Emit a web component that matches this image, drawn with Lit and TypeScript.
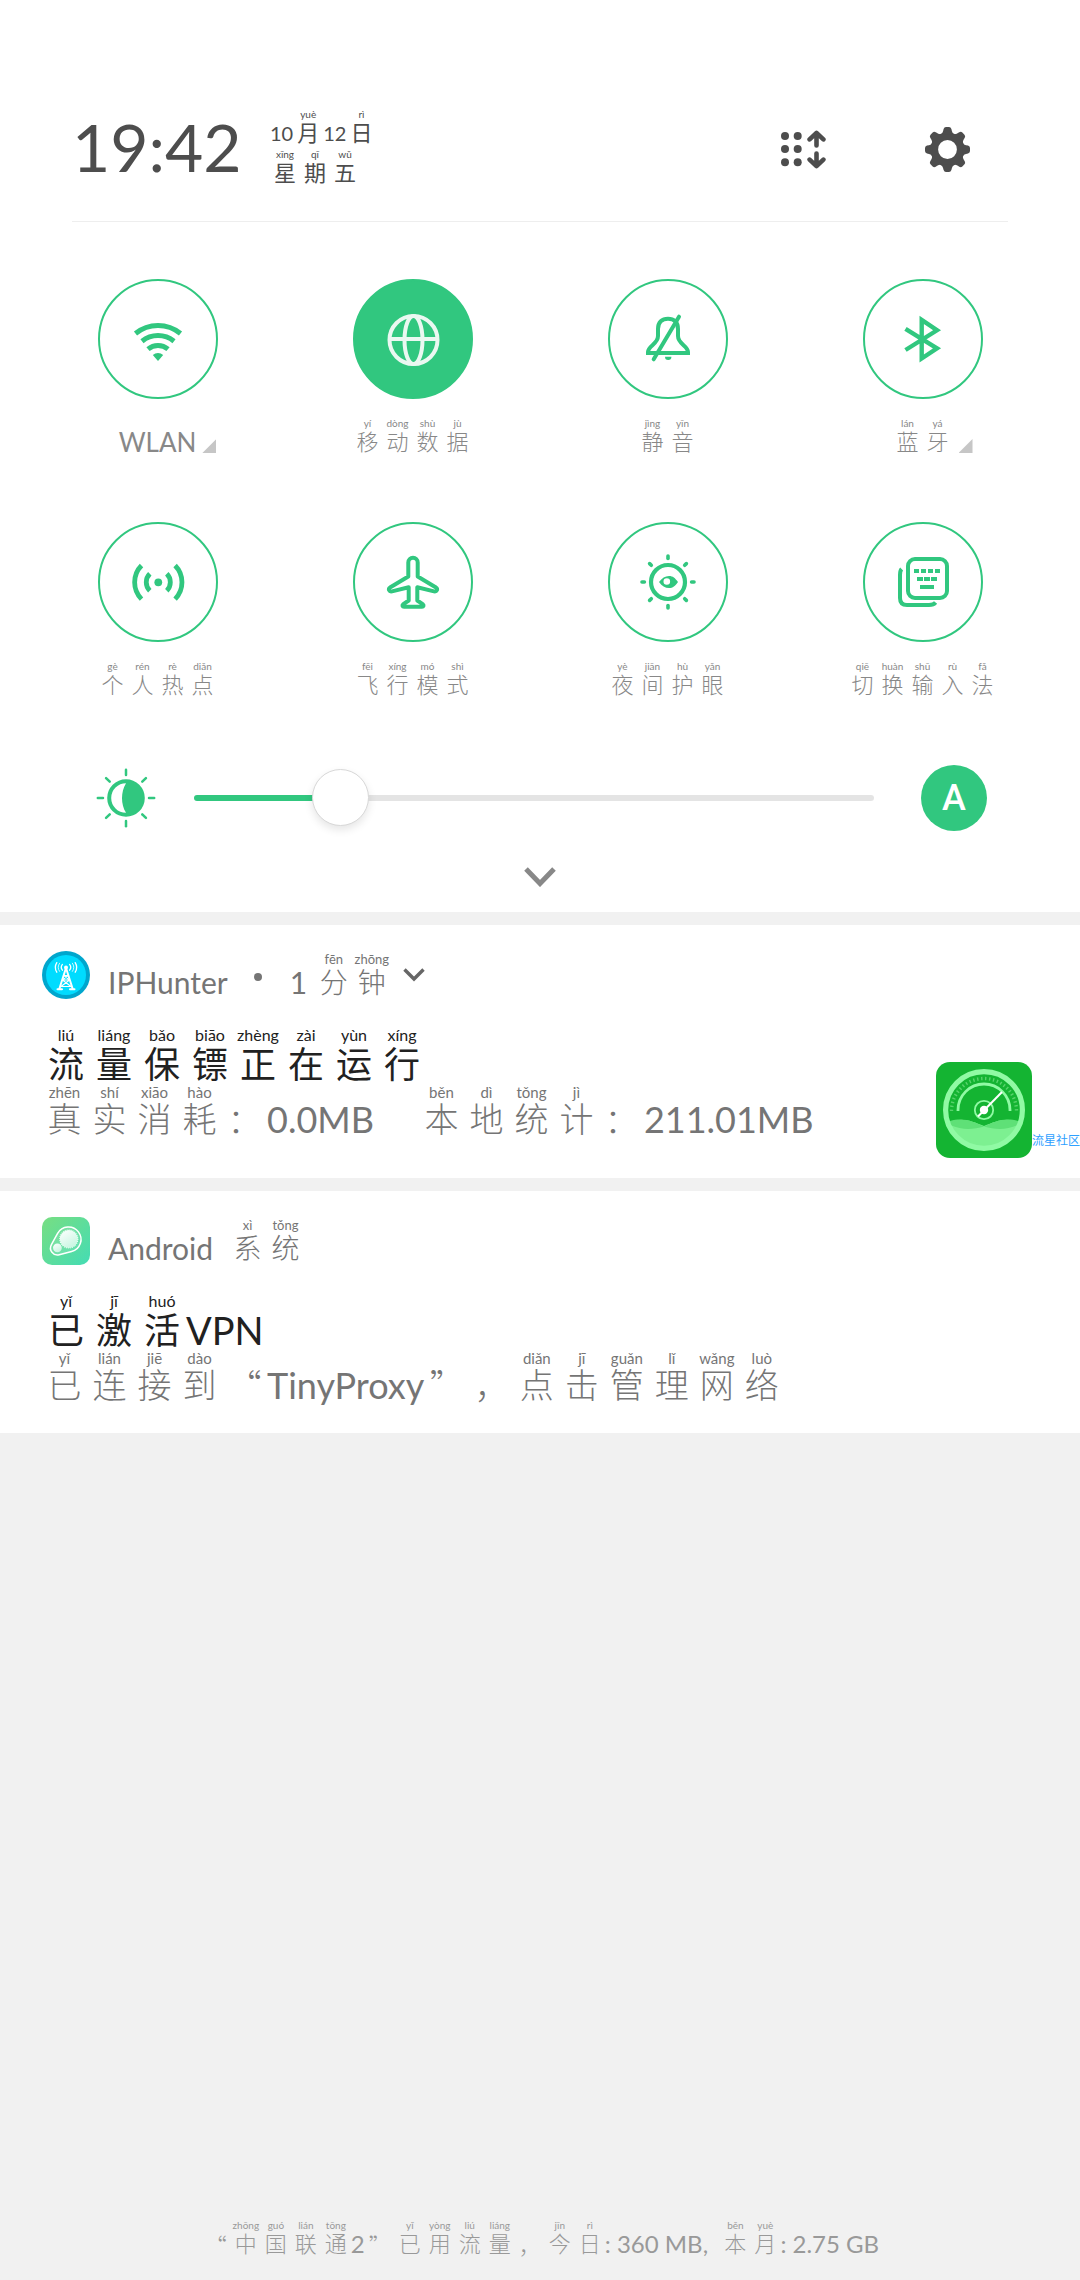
import { LitElement, html, svg, css, TemplateResult, SVGTemplateResult } from "lit";
import { customElement, property, state } from "lit/decorators.js";

/** A run is either plain Latin text or a [character, pinyin] pair. */
type Run = string | [string, string];

/** Pairs each character with its space-separated reading; "-" leaves the reading empty. */
const pair = (chars: string, readings: string): Run[] => {
  const r = readings.split(" ");
  return [...chars].map((c, i) => [c, !r[i] || r[i] === "-" ? "" : r[i]] as [string, string]);
};

@customElement("pinyin-text")
class PinyinText extends LitElement {
  @property({ attribute: false }) runs: Run[] = [];

  static styles = css`
    :host {
      display: inline-flex;
      align-items: flex-end;
      min-height: calc(var(--line) + var(--reading-line));
      white-space: pre;
      font-size: var(--latin);
      line-height: var(--line);
    }
    ruby {
      display: flex;
      flex-direction: column-reverse;
      align-items: center;
      width: var(--cell);
      font-size: var(--han);
      font-weight: var(--han-weight, 300);
      line-height: var(--line);
    }
    .mark {
      display: block;
      width: var(--cell);
      font-family: "Noto Sans CJK SC", sans-serif;
      font-size: var(--han);
      font-weight: 300;
      text-align: center;
    }
    rt {
      display: block;
      height: var(--reading-line);
      font-size: var(--reading);
      line-height: var(--reading-line);
      font-weight: 400;
      text-align: center;
    }
  `;

  private run(r: Run): TemplateResult {
    if (typeof r === "string") return html`<span>${r}</span>`;
    const [char, reading] = r;
    return reading ? html`<ruby>${char}<rt>${reading}</rt></ruby>` : html`<span class="mark">${char}</span>`;
  }

  render() {
    return this.runs.map((r) => this.run(r));
  }
}

const rays = (path: SVGTemplateResult) =>
  [0, 45, 90, 135, 180, 225, 270, 315].map((a) => svg`<g transform="rotate(${a} 30 30)">${path}</g>`);

const icons: Record<string, SVGTemplateResult> = {
  wifi: svg`<g fill="none" stroke="currentColor" stroke-width="5">
      <path d="M7.5 24.5A35.5 35.5 0 0 1 52.5 24.5"/>
      <path d="M14 32.2A25.5 25.5 0 0 1 46 32.2"/>
      <path d="M20 40.2A15.5 15.5 0 0 1 40 40.2"/></g>
      <path fill="currentColor" d="M30 52L24.8 46A8 8 0 0 1 35.2 46Z"/>`,
  globe: svg`<g fill="none" stroke="currentColor" stroke-width="4">
      <circle cx="30.5" cy="31" r="24"/><ellipse cx="30.5" cy="31" rx="9" ry="24"/><path d="M6 30H55"/></g>`,
  bell: svg`<g fill="none" stroke="currentColor" stroke-width="4">
      <path d="M10 44V43C10 37 20 35 20 27V20C20 13 24 9.7 30 9.7S40 13 40 20V27C40 35 50 37 50 43V44Z"/>
      <path stroke-linecap="round" d="M15.7 50.3L41 7.7"/></g>
      <path fill="currentColor" d="M27 47.7H33.4C33.4 50 32.4 51 30.2 51S27 50 27 47.7Z"/>`,
  bluetooth: svg`<path fill="none" stroke="currentColor" stroke-width="4.4"
      d="M12.5 19.8L44 39.3L28.7 49.5V11L44 21.3L12.5 41"/>`,
  hotspot: svg`<circle cx="30.3" cy="30.3" r="3.9" fill="currentColor"/>
      <g fill="none" stroke="currentColor" stroke-width="4.8">
      <path d="M13.5 13.5A24 24 0 0 0 13.5 47.1"/><path d="M47.1 13.5A24 24 0 0 1 47.1 47.1"/>
      <path d="M21.8 21.8A12 12 0 0 0 21.8 38.8"/><path d="M38.8 21.8A12 12 0 0 1 38.8 38.8"/></g>`,
  plane: svg`<path fill="none" stroke="currentColor" stroke-width="4" stroke-linejoin="round"
      d="M25.3 10.5A4.7 4.7 0 0 1 34.7 10.5V24.5L53 35.5C55 37 54 40 51 39.4L34.3 35.2V48.5L40 52.4C41 53.3 40.5 54.7 39 54.7H21C19.5 54.7 19 53.3 20 52.4L25.7 48.5V35.2L9 39.4C6 40 5 37 7 35.5L25.3 24.5Z"/>`,
  eye: svg`<circle cx="30" cy="30" r="17" fill="none" stroke="currentColor" stroke-width="4.2"/>
      ${rays(svg`<path stroke="currentColor" stroke-width="3.6" stroke-linecap="round" d="M30 4V6.4"/>`)}
      <path fill="currentColor" fill-rule="evenodd"
      d="M21 30C24 26 27 24 31 24S37 26 40 30C37 34 35 36 31 36S24 34 21 30ZM28.8 26.2A3.3 3.3 0 1 0 28.8 32.8A3.3 3.3 0 0 0 28.8 26.2Z"/>`,
  keyboard: svg`<g fill="none" stroke="currentColor" stroke-width="4">
      <rect x="15" y="7" width="39" height="39" rx="7"/>
      <path d="M8.6 17C7 18.6 7 20.5 7 23V46C7 50.5 9.5 53 14 53H36C39.5 53 41.5 52 42.6 50.6"/></g>
      <path fill="currentColor" d="M21 17h5v4h-5zM28 17h5v4h-5zM35 17h5v4h-5zM42 17h5v4h-5zM24 25h6v4h-6zM31 25h6v4h-6zM38 25h6v4h-6zM27 33h14v4H27z"/>`,
  brightness: svg`<path fill="currentColor" fill-rule="evenodd"
      d="M30 11.2A18.8 18.8 0 1 0 30 48.8A18.8 18.8 0 1 0 30 11.2ZM30 15.2C24.7 24 24.7 36 30 44.8A14.8 14.8 0 0 1 30 15.2Z"/>
      ${rays(svg`<path stroke="currentColor" stroke-width="2.5" stroke-linecap="round" d="M30 1.8V7"/>`)}`,
};

const icon = (name: string) =>
  html`<svg class="glyph" viewBox="0 0 60 60" aria-hidden="true">${icons[name]}</svg>`;

interface Tile {
  icon: string;
  label: Run[];
  on?: boolean;
  more?: boolean;
}

const tiles: Tile[] = [
  { icon: "wifi", label: ["WLAN"], more: true },
  { icon: "globe", label: pair("移动数据", "yí dòng shù jù"), on: true },
  { icon: "bell", label: pair("静音", "jìng yīn") },
  { icon: "bluetooth", label: pair("蓝牙", "lán yá"), more: true },
  { icon: "hotspot", label: pair("个人热点", "gè rén rè diǎn") },
  { icon: "plane", label: pair("飞行模式", "fēi xíng mó shì") },
  { icon: "eye", label: pair("夜间护眼", "yè jiān hù yǎn") },
  { icon: "keyboard", label: pair("切换输入法", "qiē huàn shū rù fǎ") },
];

const towerIcon = html`<svg class="app-icon" viewBox="0 0 48 48" aria-hidden="true">
  <circle cx="24" cy="24" r="24" fill="#00a6cd" />
  <circle cx="24" cy="24" r="20" fill="#00dcff" />
  <g fill="none" stroke="#fff" stroke-width="1.6" stroke-linecap="round" stroke-linejoin="round">
    <path d="M24 17L17.3 38M24 17L30.7 38" stroke-width="2" />
    <path d="M22 24.5H26M20.5 29H27.5M22 24.5L27.5 29M26 24.5L20.5 29M20.5 29L29 35.5M27.5 29L19 35.5M19 35.5H29" stroke-width="1.1" />
    <path d="M15.5 38.2H20M28 38.2H32.5" stroke-width="2" />
    <path d="M20.4 13.4A4.6 4.6 0 0 0 20.4 19.2M27.6 13.4A4.6 4.6 0 0 1 27.6 19.2" stroke-width="1.3" />
    <path d="M17.6 12.2A7 7 0 0 0 17.6 20.4M30.4 12.2A7 7 0 0 1 30.4 20.4" stroke-width="0.8" />
    <path d="M14.8 11.6A9 9 0 0 0 14.8 21.2M33.2 11.6A9 9 0 0 1 33.2 21.2" stroke-width="1.3" />
  </g>
  <circle cx="24" cy="16.4" r="2" fill="#fff" />
</svg>`;

const systemIcon = html`<svg class="app-icon" viewBox="0 0 48 48" aria-hidden="true">
  <defs>
    <linearGradient id="sys" x1="0" y1="0" x2="1" y2="1">
      <stop offset="0" stop-color="#78de82" />
      <stop offset="1" stop-color="#44dcb4" />
    </linearGradient>
    <linearGradient id="orb" x1="0" y1="0" x2="0.6" y2="1">
      <stop offset="0" stop-color="#fff" />
      <stop offset="1" stop-color="#c9f6e2" />
    </linearGradient>
  </defs>
  <rect width="48" height="48" rx="10" fill="url(#sys)" />
  <path d="M15.6 16.4A12.5 12.5 0 1 1 29.6 34.6L17.2 37.8A7 7 0 0 1 9.4 27.6Z" fill="#fff" fill-opacity="0.12" stroke="#fff" stroke-width="1.5" />
  <circle cx="26.8" cy="22" r="9" fill="url(#orb)" />
  <circle cx="26.8" cy="22" r="9" fill="none" stroke="#eafff5" stroke-width="1.2" stroke-dasharray="1 1" />
  <circle cx="15.4" cy="30.8" r="4.4" fill="url(#orb)" />
</svg>`;

const gaugeIcon = html`<svg class="gauge" viewBox="0 0 96 96" aria-hidden="true">
  <rect width="96" height="96" rx="14" fill="#14b432" />
  <path d="M14 60C26 55 36 59 48 64C60 59 70 55 82 60C78 76 64 86 48 86S18 76 14 60Z" fill="#7df091" />
  <path d="M14 59C28 55 38 60 48 64.5C38 67 28 69 14 63ZM82 59C68 55 58 60 48 64.5C58 67 68 69 82 63Z" fill="#5fe077" />
  <circle cx="48" cy="48" r="38.4" fill="none" stroke="#90faa4" stroke-width="5.2" />
  <path d="M15.5 49A32.5 32.5 0 0 1 80.5 49" fill="none" stroke="#58d36c" stroke-width="3.4" stroke-dasharray="1.4 2.6" />
  <path d="M22 49V48A26 26 0 0 1 74 48V49" fill="none" stroke="#90faa4" stroke-width="2.8" />
  <circle cx="48" cy="48" r="9.2" fill="none" stroke="#90faa4" stroke-width="1.8" />
  <path d="M42 54.5L66 30" stroke="#fff" stroke-width="2" />
  <circle cx="48" cy="48" r="4.2" fill="#fff" />
</svg>`;

@customElement("app-root")
class AppRoot extends LitElement {
  @state() private level = 19;

  static styles = css`
    :host {
      --green: #31c77f;
      display: flex;
      flex-direction: column;
      min-height: 100vh;
      background: #f1f1f1;
      color: #757575;
      font-family: Lato, "Noto Sans CJK SC", sans-serif;
      font-weight: 400;
    }
    .small {
      --cell: 30px;
      --han: 22px;
      --latin: 26px;
      --line: 26px;
      --reading: 10px;
      --reading-line: 12px;
    }
    .medium {
      --cell: 38px;
      --han: 28px;
      --latin: 30px;
      --line: 32px;
      --reading: 13px;
      --reading-line: 14px;
    }
    .large {
      --cell: 45px;
      --han: 34px;
      --latin: 36px;
      --line: 38px;
      --reading: 15px;
      --reading-line: 16px;
    }
    .title {
      --cell: 48px;
      --han: 36px;
      --han-weight: 400;
      --latin: 38px;
      --line: 40px;
      --reading: 16px;
      --reading-line: 18px;
      color: #212121;
    }
    button {
      display: flex;
      align-items: center;
      justify-content: center;
      margin: 0;
      padding: 0;
      border: 0;
      background: none;
      color: inherit;
      font: inherit;
      cursor: pointer;
    }
    svg {
      display: block;
      flex: none;
    }
    .panel {
      background: #fff;
    }
    .top {
      display: flex;
      align-items: center;
      height: 148px;
      margin: 0 72px;
      padding: 73px 38px 0 0;
      border-bottom: 1px solid #eee;
      color: #4d4d4d;
    }
    .time {
      min-width: 198px;
      font-size: 66px;
      line-height: 76px;
    }
    .date {
      --latin: 20px;
      --han-weight: 400;
      display: flex;
      flex-direction: column;
      gap: 2px;
      flex: 1;
    }
    .actions {
      display: flex;
      align-items: center;
      gap: 99px;
      padding-top: 4px;
    }
    .tiles {
      display: grid;
      grid-template-columns: repeat(4, 1fr);
      row-gap: 67px;
      padding: 57px 30px 67px;
    }
    .tile {
      flex-direction: column;
      gap: 18px;
      color: #888;
    }
    .disc {
      display: flex;
      align-items: center;
      justify-content: center;
      box-sizing: border-box;
      width: 120px;
      height: 120px;
      border: 2px solid var(--green);
      border-radius: 50%;
      color: var(--green);
    }
    .on .disc {
      background: var(--green);
      color: #eaf8f1;
    }
    .glyph {
      width: 60px;
      height: 60px;
    }
    .label {
      display: grid;
      grid-template-columns: 1fr auto 1fr;
      column-gap: 6px;
      align-items: end;
      width: 100%;
    }
    .label pinyin-text {
      grid-column: 2;
    }
    .corner {
      width: 14px;
      height: 14px;
      margin-bottom: 2px;
      background: #c6c6c6;
      clip-path: polygon(100% 0, 100% 100%, 0 100%);
    }
    .slider {
      display: flex;
      align-items: center;
      padding: 0 93px 0 96px;
      color: var(--green);
    }
    .range {
      appearance: none;
      flex: 1;
      min-width: 0;
      height: 58px;
      margin: 0 47px 0 38px;
      background: none;
    }
    .range::-webkit-slider-runnable-track {
      height: 6px;
      border-radius: 3px;
      background: linear-gradient(to right, var(--green) var(--level), #e4e4e4 var(--level));
    }
    .range::-webkit-slider-thumb {
      appearance: none;
      box-sizing: border-box;
      width: 57px;
      height: 57px;
      margin-top: -26px;
      border: 1px solid #d8d8d8;
      border-radius: 50%;
      background: #fff;
      box-shadow: 0 4px 8px rgba(0, 0, 0, 0.1);
    }
    .auto {
      width: 66px;
      height: 66px;
      border-radius: 50%;
      background: var(--green);
      color: #fff;
      font-family: Roboto, sans-serif;
      font-size: 36px;
      font-weight: 500;
    }
    .expand {
      width: 100%;
      padding: 36px 0 25px;
      color: #888;
    }
    .card {
      position: relative;
      margin-top: 13px;
      padding: 26px 48px 20px 42px;
      background: #fff;
    }
    .card-head {
      display: flex;
      align-items: center;
      height: 48px;
    }
    .app-icon {
      width: 48px;
      height: 48px;
      margin-right: 18px;
    }
    .dot {
      width: 8px;
      height: 8px;
      margin: 4px 28px 0 26px;
      border-radius: 50%;
      background: #757575;
    }
    .more {
      margin-left: 12px;
      color: #666;
    }
    .card-body {
      display: flex;
      align-items: flex-start;
      justify-content: space-between;
    }
    .copy {
      display: flex;
      flex-direction: column;
      padding: 27px 0 9px;
    }
    h2,
    p {
      display: flex;
      margin: 0;
      font-weight: 400;
    }
    .gauge {
      width: 96px;
      height: 96px;
      margin-top: 63px;
    }
    .stamp {
      position: absolute;
      right: 0;
      bottom: 28px;
      color: #2ea0ff;
      font-size: 12px;
      line-height: 18px;
    }
    .usage {
      --latin: 24px;
      display: flex;
      justify-content: center;
      margin-top: auto;
      padding-bottom: 23px;
      color: #999;
    }
  `;

  private tile(t: Tile): TemplateResult {
    return html`<button class="tile ${t.on ? "on" : ""}" aria-pressed=${t.on ? "true" : "false"}>
      <span class="disc">${icon(t.icon)}</span>
      <span class="label small">
        <pinyin-text .runs=${t.label}></pinyin-text>
        ${t.more ? html`<span class="corner"></span>` : ""}
      </span>
    </button>`;
  }

  render() {
    const offset = `calc(28px + (100% - 57px) * ${this.level / 100})`;
    return html`
      <section class="panel">
        <header class="top">
          <time class="time">19:42</time>
          <div class="date small">
            <pinyin-text .runs=${["10", ...pair("月", "yuè"), "12", ...pair("日", "rì")]}></pinyin-text>
            <pinyin-text .runs=${pair("星期五", "xīng qī wǔ")}></pinyin-text>
          </div>
          <div class="actions">
            <button aria-label="编辑">
              <svg width="45" height="39" viewBox="0 0 45 39" fill="currentColor" aria-hidden="true">
                <circle cx="4" cy="6" r="4" /><circle cx="16.7" cy="6" r="4" />
                <circle cx="4" cy="19" r="4" /><circle cx="16.7" cy="19" r="4" />
                <circle cx="4" cy="32.3" r="4" /><circle cx="16.7" cy="32.3" r="4" />
                <path fill="none" stroke="currentColor" stroke-width="4.6" stroke-linecap="round" stroke-linejoin="round"
                  d="M35.5 3V15.5M28.6 9.4L35.5 2.8L42.4 9.4M35.5 23.5V36M28.6 29.6L35.5 36.2L42.4 29.6" />
              </svg>
            </button>
            <button aria-label="设置">
              <svg width="45" height="45" viewBox="0 0 45 45" aria-hidden="true">
                <circle cx="22.5" cy="22.5" r="13.2" fill="none" stroke="currentColor" stroke-width="7.6" />
                ${[0, 45, 90, 135, 180, 225, 270, 315].map(
                  (a) => svg`<path transform="rotate(${a} 22.5 22.5)" fill="currentColor"
                    d="M18.6 2Q19.2 0 21 0H24Q25.8 0 26.4 2C27 5 27.6 6.4 29.6 7.6H15.4C17.4 6.4 18 5 18.6 2Z"/>`
                )}
              </svg>
            </button>
          </div>
        </header>
        <div class="tiles">${tiles.map((t) => this.tile(t))}</div>
        <div class="slider">
          ${icon("brightness")}
          <input
            class="range"
            type="range"
            min="0"
            max="100"
            aria-label="亮度"
            .value=${String(this.level)}
            style="--level: ${offset}"
            @input=${(e: Event) => (this.level = Number((e.target as HTMLInputElement).value))}
          />
          <button class="auto">A</button>
        </div>
        <button class="expand" aria-label="展开">
          <svg width="32" height="20" viewBox="0 0 32 20" aria-hidden="true">
            <path d="M2 2L16 16.5L30 2" fill="none" stroke="currentColor" stroke-width="5" />
          </svg>
        </button>
      </section>

      <article class="card">
        <div class="card-head medium">
          ${towerIcon}
          <pinyin-text .runs=${["IPHunter"]}></pinyin-text>
          <span class="dot"></span>
          <pinyin-text .runs=${["1 ", ...pair("分钟", "fēn zhōng")]}></pinyin-text>
          <button class="more" aria-label="展开通知">
            <svg width="22" height="14" viewBox="0 0 22 14" aria-hidden="true">
              <path d="M1.5 1.5L11 11L20.5 1.5" fill="none" stroke="currentColor" stroke-width="3.4" />
            </svg>
          </button>
        </div>
        <div class="card-body">
          <div class="copy">
            <h2 class="title">
              <pinyin-text .runs=${pair("流量保镖正在运行", "liú liáng bǎo biāo zhèng zài yùn xíng")}></pinyin-text>
            </h2>
            <p class="large">
              <pinyin-text
                .runs=${[
                  ...pair("真实消耗：", "zhēn shí xiāo hào -"),
                  "0.0MB",
                  ...pair("　本地统计：", "- běn dì tǒng jì -"),
                  "211.01MB",
                ]}
              ></pinyin-text>
            </p>
          </div>
          ${gaugeIcon}
        </div>
        <span class="stamp">流星社区</span>
      </article>

      <article class="card">
        <div class="card-head medium">
          ${systemIcon}
          <pinyin-text .runs=${["Android  ", ...pair("系统", "xì tǒng")]}></pinyin-text>
        </div>
        <div class="card-body">
          <div class="copy">
            <h2 class="title">
              <pinyin-text .runs=${[...pair("已激活", "yǐ jī huó"), "VPN"]}></pinyin-text>
            </h2>
            <p class="large">
              <pinyin-text
                .runs=${[
                  ...pair("已连接到“", "yǐ lián jiē dào -"),
                  "TinyProxy",
                  ...pair("”，点击管理网络", "- - diǎn jī guǎn lǐ wǎng luò"),
                ]}
              ></pinyin-text>
            </p>
          </div>
        </div>
      </article>

      <footer class="usage small">
        <pinyin-text
          .runs=${[
            ...pair("“中国联通", "- zhōng guó lián tōng"),
            "2",
            ...pair("”已用流量，今日", "- yǐ yòng liú liáng - jīn rì"),
            ": 360 MB,  ",
            ...pair("本月", "běn yuè"),
            ": 2.75 GB",
          ]}
        ></pinyin-text>
      </footer>
    `;
  }
}
